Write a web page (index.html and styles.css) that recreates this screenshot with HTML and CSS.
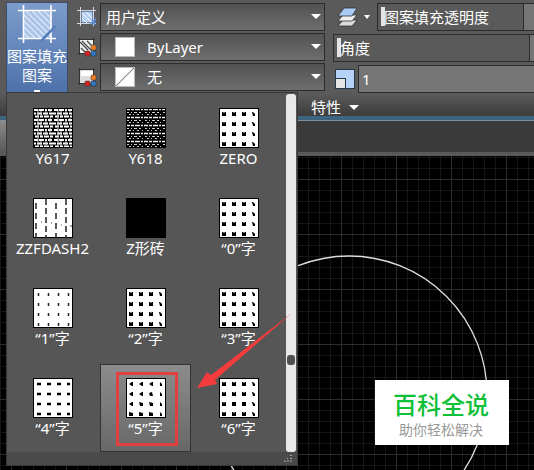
FILE: index.html
```
<!DOCTYPE html>
<html lang="zh-CN">
<head>
    <meta charset="UTF-8">
    <title>图案填充</title>
    <link rel="stylesheet" href="styles.css">
</head>
<body>

    <!-- shared drawing for the pattern previews -->
    <svg class="defs" width="0" height="0" aria-hidden="true">
        <defs>
            <pattern id="weave" width="20" height="10" patternUnits="userSpaceOnUse">
                <rect width="20" height="10" fill="#000"/>
                <path d="M1 2h4M6 2h5M12 2h2M15 2h4M0 5.500h3M4 5.500h5M10 5.500h5M16 5.500h4M2 8.500h4M7 8.500h3M11 8.500h5M17 8.500h3" stroke="#fff" stroke-width="2"/>
                <path d="M5 0v9M13 2v5M17 0v4M8 3v5" stroke="#ccc"/>
            </pattern>
            <pattern id="weave2" width="18" height="8" patternUnits="userSpaceOnUse">
                <rect width="18" height="8" fill="#000"/>
                <path d="M0 1.500h4M5 1.500h3M9 1.500h5M15 1.500h2" stroke="#eee" stroke-width="1.500"/>
                <path d="M1 4.500h2M5 4.500h1M8 4.500h3M13 4.500h2M3 6.500h2M7 6.500h1M11 6.500h2M16 6.500h1" stroke="#ccc" stroke-width="1.200"/>
            </pattern>
            <g id="block"><path d="M0 0h1l1 1 1-1h1v4h-4z"/></g>
            <g id="blockRow">
                <use href="#block" x="3"/><use href="#block" x="13"/><use href="#block" x="23"/>
                <path d="M33 0h1l2 2v2h-2z"/>
            </g>
            <g id="blocks">
                <rect x=".5" y=".5" width="39" height="39" fill="#fff" stroke="#000"/>
                <use href="#blockRow" y="4"/><use href="#blockRow" y="14"/><use href="#blockRow" y="24"/><use href="#blockRow" y="34"/>
            </g>
        </defs>
    </svg>

    <div class="ribbon">
        <div class="panel">
            <button class="pattern-button" type="button">
                <svg width="46" height="44" viewBox="0 0 46 44">
                    <rect x="10" y="8" width="27" height="27" fill="#a9c2e6"/>
                    <path d="M10 30l5 5M10 24l11 11M10 18l17 17M10 12l23 23M12 8l25 25M18 8l19 19M24 8l13 13M30 8l7 7" stroke="#dbe6f6" stroke-width="1.400"/>
                    <path d="M4 7.500h38M4 35.500h38M9.500 2v38M37 2v38" stroke="#fff" stroke-width="1.600"/>
                    <path d="M41 22l-12 12-5 6 7-4 11-12z" fill="#527db9"/>
                </svg>
                <span>图案填充</span>
                <span>图案</span>
                <i class="more"></i>
            </button>

            <div class="combos">
                <label class="icon" for="type" aria-label="图案类型">
                    <svg width="20" height="20" viewBox="0 0 20 20">
                        <rect x="4" y="4" width="12" height="12" fill="#b5d0f3" stroke="#243a5c"/>
                        <path d="M5 11l5 5M5 6l10 10M9 5l6 6" stroke="#fff"/>
                        <path d="M0 3.500h19M0 16.500h19M3.500 0v19M16.500 0v19" stroke="#d5d9df"/>
                        <path d="M19 10l-6 7 5 1z" fill="#5c8cd8"/>
                    </svg>
                </label>
                <div class="combo">
                    <select id="type"><option>用户定义</option></select>
                </div>

                <label class="icon" for="color" aria-label="图案颜色">
                    <svg width="20" height="20" viewBox="0 0 20 20">
                        <path d="M1 2.500h17M2.500 1v17M16.500 1v8M1 16.500h7" stroke="#333"/>
                        <rect x="3" y="3" width="13" height="13" fill="#eee"/>
                        <path d="M4 11l5 5M3 5l8 8M5 4l10 10M10 4l6 6" stroke="#444" stroke-width="1.200"/>
                        <rect x="14" y="8" width="5" height="5" rx="1" fill="#f08021" stroke="#333" stroke-width=".5"/>
                        <rect x="8" y="14" width="5" height="5" rx="1" fill="#d32424" stroke="#333" stroke-width=".5"/>
                        <rect x="14" y="14" width="5" height="5" rx="1" fill="#337ac8" stroke="#222" stroke-width=".5"/>
                    </svg>
                </label>
                <div class="combo">
                    <span class="swatch"></span>
                    <select id="color"><option>ByLayer</option></select>
                </div>

                <label class="icon" for="background" aria-label="背景色">
                    <svg width="20" height="20" viewBox="0 0 20 20">
                        <path d="M1 2.500h17M2.500 1v17M16.500 1v8M1 16.500h7" stroke="#333"/>
                        <rect x="3" y="3" width="13" height="13" fill="#ddd"/>
                        <rect x="4" y="4" width="12" height="5" fill="#fff"/>
                        <rect x="14" y="8" width="5" height="5" rx="1" fill="#f08021" stroke="#333" stroke-width=".5"/>
                        <rect x="8" y="14" width="5" height="5" rx="1" fill="#d32424" stroke="#333" stroke-width=".5"/>
                        <rect x="14" y="14" width="5" height="5" rx="1" fill="#337ac8" stroke="#222" stroke-width=".5"/>
                    </svg>
                </label>
                <div class="combo">
                    <span class="swatch none"></span>
                    <select id="background"><option>无</option></select>
                </div>
            </div>

            <div class="values">
                <div class="value-row">
                    <button class="layers" type="button" aria-label="图层">
                        <svg width="36" height="20" viewBox="0 0 36 20">
                            <g stroke="#333" stroke-width=".8">
                                <path d="M1 19l5-6h14l-5 6z" fill="#ddd"/>
                                <path d="M1 14l5-6h14l-5 6z" fill="#eee"/>
                                <path d="M1 9l6-8h13l-5 8z" fill="#a9cbf5"/>
                            </g>
                            <path d="M27 8h6l-3 4z" fill="#fff"/>
                        </svg>
                    </button>
                    <div class="slider">
                        <label for="opacity">图案填充透明度</label>
                        <input type="range" id="opacity" value="0">
                    </div>
                    <span class="spin wide"></span>
                </div>
                <div class="value-row">
                    <div class="slider">
                        <label for="angle">角度</label>
                        <input type="range" id="angle" value="0">
                    </div>
                    <span class="spin"></span>
                </div>
                <div class="value-row">
                    <label class="scale-icon" for="scale" aria-label="比例">
                        <svg width="20" height="20" viewBox="0 0 20 20">
                            <rect x=".5" y=".5" width="19" height="19" fill="#b5d3f6" stroke="#26364c"/>
                            <rect x=".5" y="9.500" width="10" height="10" fill="#e6e6e6" stroke="#26364c"/>
                        </svg>
                    </label>
                    <input class="scale" type="text" id="scale" value="1">
                </div>
            </div>
        </div>
        <button class="panel-title" type="button">特性 <i class="arrow"></i></button>
    </div>

    <div class="tabs"><div class="tab"></div></div>

    <div class="canvas">
        <svg class="drawing" width="534" height="314" viewBox="0 0 534 314">
            <circle cx="349" cy="238" r="138" fill="none" stroke="#ddd" stroke-width="1.300"/>
        </svg>
        <div class="brand">
            <strong>百科全说</strong>
            <span>助你轻松解决</span>
        </div>
    </div>

    <div class="gallery">
        <div class="gallery-body">
            <div class="patterns">
                <button class="item" type="button">
                    <svg width="40" height="40"><rect x=".5" y=".5" width="39" height="39" fill="url(#weave)" stroke="#000"/></svg>
                    <span>Y617</span>
                </button>
                <button class="item" type="button">
                    <svg width="40" height="40"><rect x=".5" y=".5" width="39" height="39" fill="url(#weave2)" stroke="#000"/></svg>
                    <span>Y618</span>
                </button>
                <button class="item" type="button">
                    <svg width="40" height="40"><use href="#blocks"/></svg>
                    <span>ZERO</span>
                </button>
                <button class="item" type="button">
                    <svg width="40" height="40">
                        <rect x=".5" y=".5" width="39" height="39" fill="#fff" stroke="#000"/>
                        <g stroke="#222" stroke-width="1.500">
                            <path d="M3 5v35M23 5v35" stroke-dasharray="6 4"/>
                            <path d="M13 1v39M33 1v39" stroke-dasharray="6 3"/>
                        </g>
                        <path d="M8 24h1M18 25h1M28 27h1M37 28h2" stroke="#444"/>
                    </svg>
                    <span>ZZFDASH2</span>
                </button>
                <button class="item" type="button">
                    <svg width="40" height="40"><rect width="40" height="40"/></svg>
                    <span>Z形砖</span>
                </button>
                <button class="item" type="button">
                    <svg width="40" height="40"><use href="#blocks"/></svg>
                    <span>“0”字</span>
                </button>
                <button class="item" type="button">
                    <svg width="40" height="40">
                        <rect x=".5" y=".5" width="39" height="39" fill="#fff" stroke="#000"/>
                        <path d="M5.500 5v34M15.500 5v34M25.500 5v34M35.500 5v34" stroke="#222" stroke-width="1.500" stroke-dasharray="3 7"/>
                    </svg>
                    <span>“1”字</span>
                </button>
                <button class="item" type="button">
                    <svg width="40" height="40"><use href="#blocks"/></svg>
                    <span>“2”字</span>
                </button>
                <button class="item" type="button">
                    <svg width="40" height="40"><use href="#blocks"/></svg>
                    <span>“3”字</span>
                </button>
                <button class="item" type="button">
                    <svg width="40" height="40">
                        <rect x=".5" y=".5" width="39" height="39" fill="#fff" stroke="#000"/>
                        <path d="M4 6h4M14 6h4M24 6h4M34 6h3M4 16h4M14 16h4M24 16h4M34 16h3M4 26h4M14 26h4M24 26h4M34 26h3M4 36h4M14 36h4M24 36h4M34 36h3" stroke="#000" stroke-width="2.500"/>
                    </svg>
                    <span>“4”字</span>
                </button>
                <button class="item selected" type="button">
                    <svg width="40" height="40">
                        <rect x=".5" y=".5" width="39" height="39" fill="#fff" stroke="#000"/>
                        <path d="M3 6l3-2h1v4h-1zM13 6l3-2h1v4h-1zM23 6l3-2h1v4h-1zM34 4l2 2v2h-2z"/>
                        <path d="M3 16l3-2h1v4h-1zM13 16l3-2h1v4h-1zM23 15l3-1 1 4h-3zM34 14l2 2v2h-2z"/>
                        <path d="M3 26l3-2h1v4h-1zM13 24l4 1v3h-3zM23 24l4 1v3h-3zM34 24l2 2v2h-2z"/>
                        <path d="M3 34l4 1v3h-4zM13 34l4 1v3h-4zM23 34l4 1v3h-4zM34 34l2 2v2h-2z"/>
                    </svg>
                    <span>“5”字</span>
                </button>
                <button class="item" type="button">
                    <svg width="40" height="40"><use href="#blocks"/><path d="M13 24h4v4h-4zM23 24h4v4h-4z"/></svg>
                    <span>“6”字</span>
                </button>
            </div>
            <div class="scrollbar"><span class="scroll-thumb"></span></div>
        </div>
        <div class="gallery-footer">
            <svg width="10" height="8" viewBox="0 0 10 8">
                <path d="M6 1.500h2M3 4.500h1M6 4.500h2M0 7h2M3 7h2M6 7h2" stroke="#aaa"/>
            </svg>
        </div>
        <svg class="pointer" width="98" height="78" viewBox="0 0 98 78">
            <path d="M0 76L10 60l4 3L95 1 18 68l2 4z" fill="#f43c3c"/>
        </svg>
    </div>

</body>
</html>
```

FILE: styles.css
```
* {
    box-sizing: border-box;
}

body {
    margin: 0;
    min-height: 100vh;
    display: flex;
    flex-direction: column;
    position: relative;
    overflow: hidden;
    background: #000;
    color: #fff;
    font-family: "Noto Sans", "Noto Sans CJK SC", sans-serif;
    font-size: 15px;
}

button,
input,
select {
    font: inherit;
    color: inherit;
    border: none;
    background: none;
    padding: 0;
    margin: 0;
}

svg {
    display: block;
    flex: none;
}

.defs {
    position: absolute;
}

/* ribbon */
.ribbon {
    background: linear-gradient(#5a5a5a 0, #5a5a5a 94px, #3c3c3c 116px);
    border-bottom: 4px solid #3d6580;
    padding: 2px 0 0 6px;
}

.panel {
    display: flex;
    height: 92px;
}

.pattern-button {
    width: 62px;
    flex: none;
    display: flex;
    flex-direction: column;
    align-items: center;
    background: linear-gradient(#7d9ccb, #4c71aa);
    border: 1px solid #3b4d6b;
    line-height: 19px;
    white-space: nowrap;
}

.more {
    width: 6px;
    height: 2px;
    margin-top: 5px;
    background: #fff;
}

.combos {
    width: 257px;
    flex: none;
    padding-left: 9px;
    display: grid;
    grid-template-columns: 23px 1fr;
    grid-template-rows: 29px 29px 29px;
    row-gap: 1px;
    align-items: center;
}

.icon {
    display: flex;
}

.combo {
    display: flex;
    align-items: center;
    height: 28px;
    background: linear-gradient(#525252, #6e6e6e);
    border: 1px solid #2c2c2c;
}

.combo select {
    flex: 1;
    height: 26px;
    padding-left: 5px;
    appearance: none;
    background: url("data:image/svg+xml,%3Csvg xmlns='http://www.w3.org/2000/svg' width='10' height='5'%3E%3Cpath d='M0 0h10L5 5z' fill='%23fff'/%3E%3C/svg%3E") no-repeat right 3px center;
}

.swatch {
    width: 20px;
    height: 20px;
    margin: 0 7px 0 14px;
    background: #fff;
    border: 1px solid #bbb;
}

.swatch.none {
    background: linear-gradient(to bottom right, #fff 47%, #888 48%, #888 52%, #fff 53%);
}

.values {
    flex: 1;
    min-width: 0;
    margin-left: 8px;
    display: flex;
    flex-direction: column;
    gap: 2px;
}

.value-row {
    display: flex;
    align-items: center;
    height: 29px;
}

.layers {
    padding-left: 4px;
    width: 44px;
}

.slider {
    flex: 1;
    position: relative;
    height: 28px;
    line-height: 26px;
    padding-left: 6px;
    border: 1px solid #2c2c2c;
    white-space: nowrap;
}

.slider input {
    position: absolute;
    inset: 0;
    width: 100%;
    padding-left: 3px;
    appearance: none;
}

.slider input::-webkit-slider-thumb {
    appearance: none;
    width: 4px;
    height: 19px;
    background: #e4e4e4;
}

.spin {
    width: 4px;
    height: 28px;
    background: #757575;
    border-top: 1px solid #2c2c2c;
    border-bottom: 1px solid #2c2c2c;
}

.spin.wide {
    width: 10px;
}

.scale-icon {
    padding: 0 3px 0 2px;
}

.scale {
    flex: 1;
    min-width: 0;
    height: 28px;
    padding-left: 3px;
    background: #757575;
    border: 1px solid #2c2c2c;
    border-right: none;
}

.panel-title {
    display: flex;
    align-items: center;
    gap: 8px;
    height: 22px;
    line-height: 22px;
    margin-left: 305px;
    padding-top: 4px;
}

.arrow {
    border: 5px solid transparent;
    border-top-color: #fff;
    border-bottom: none;
}

.tabs {
    height: 36px;
    background: #3a3a3a;
    border-top: 1px solid #7e8f9a;
    border-bottom: 4px solid #5a5a5a;
}

.tab {
    width: 120px;
    height: 100%;
    background: linear-gradient(#8a8a8a, #5a5a5a);
}

/* drawing area */
.canvas {
    flex: 1;
    position: relative;
    overflow: hidden;
    background-color: #000;
    background-image:
        linear-gradient(to right, #2b2e30 1px, transparent 1px),
        linear-gradient(#2b2e30 1px, transparent 1px),
        linear-gradient(to right, #14171a 1px, transparent 1px),
        linear-gradient(#14171a 1px, transparent 1px);
    background-size: 55px 55px, 55px 55px, 11px 11px, 11px 11px;
    background-position: 11px 0, 0 23px, 0 0, 0 1px;
}

.drawing {
    position: absolute;
    left: 0;
    top: 0;
}

.brand {
    position: absolute;
    right: 25px;
    bottom: 25px;
    width: 134px;
    height: 65px;
    display: flex;
    flex-direction: column;
    align-items: center;
    padding: 12px 2px 0 0;
    background: #fff;
    font-family: "Liberation Sans", "Noto Sans CJK SC", sans-serif;
}

.brand strong {
    font-size: 24px;
    line-height: 28px;
    font-weight: 500;
    color: #10c038;
}

.brand span {
    font-size: 14px;
    line-height: 20px;
    color: #999;
}

/* drop-down gallery */
.gallery {
    position: absolute;
    left: 6px;
    top: 92px;
    width: 292px;
    background: #565656;
    border: 1px solid #383838;
}

.gallery-body {
    display: flex;
    padding-top: 1px;
}

.patterns {
    flex: 1;
    display: grid;
    grid-template-columns: repeat(3, 1fr);
    grid-auto-rows: 88px;
    gap: 2px;
}

.item {
    display: flex;
    flex-direction: column;
    align-items: center;
    line-height: 20px;
    border: 1px solid transparent;
    padding-top: 13px;
}

.item.selected {
    position: relative;
    background: linear-gradient(#8c8c8c, #686868);
    border-color: #333;
}

.item.selected::after {
    content: "";
    position: absolute;
    inset: 7px 12px 5px 15px;
    border: 3px solid #e04040;
}

.scrollbar {
    width: 10px;
    margin: 0 1px 0 2px;
    padding-top: 261px;
    background: #e8e8e8;
    border-radius: 3px;
}

.scroll-thumb {
    display: block;
    height: 10px;
    margin: 0 1px;
    border-radius: 3px;
    background: #505050;
}

.gallery-footer {
    display: flex;
    justify-content: flex-end;
    height: 13px;
    padding: 2px 3px;
    background: #4a4a4a;
}

.pointer {
    position: absolute;
    left: 190px;
    top: 219px;
    pointer-events: none;
}
```
